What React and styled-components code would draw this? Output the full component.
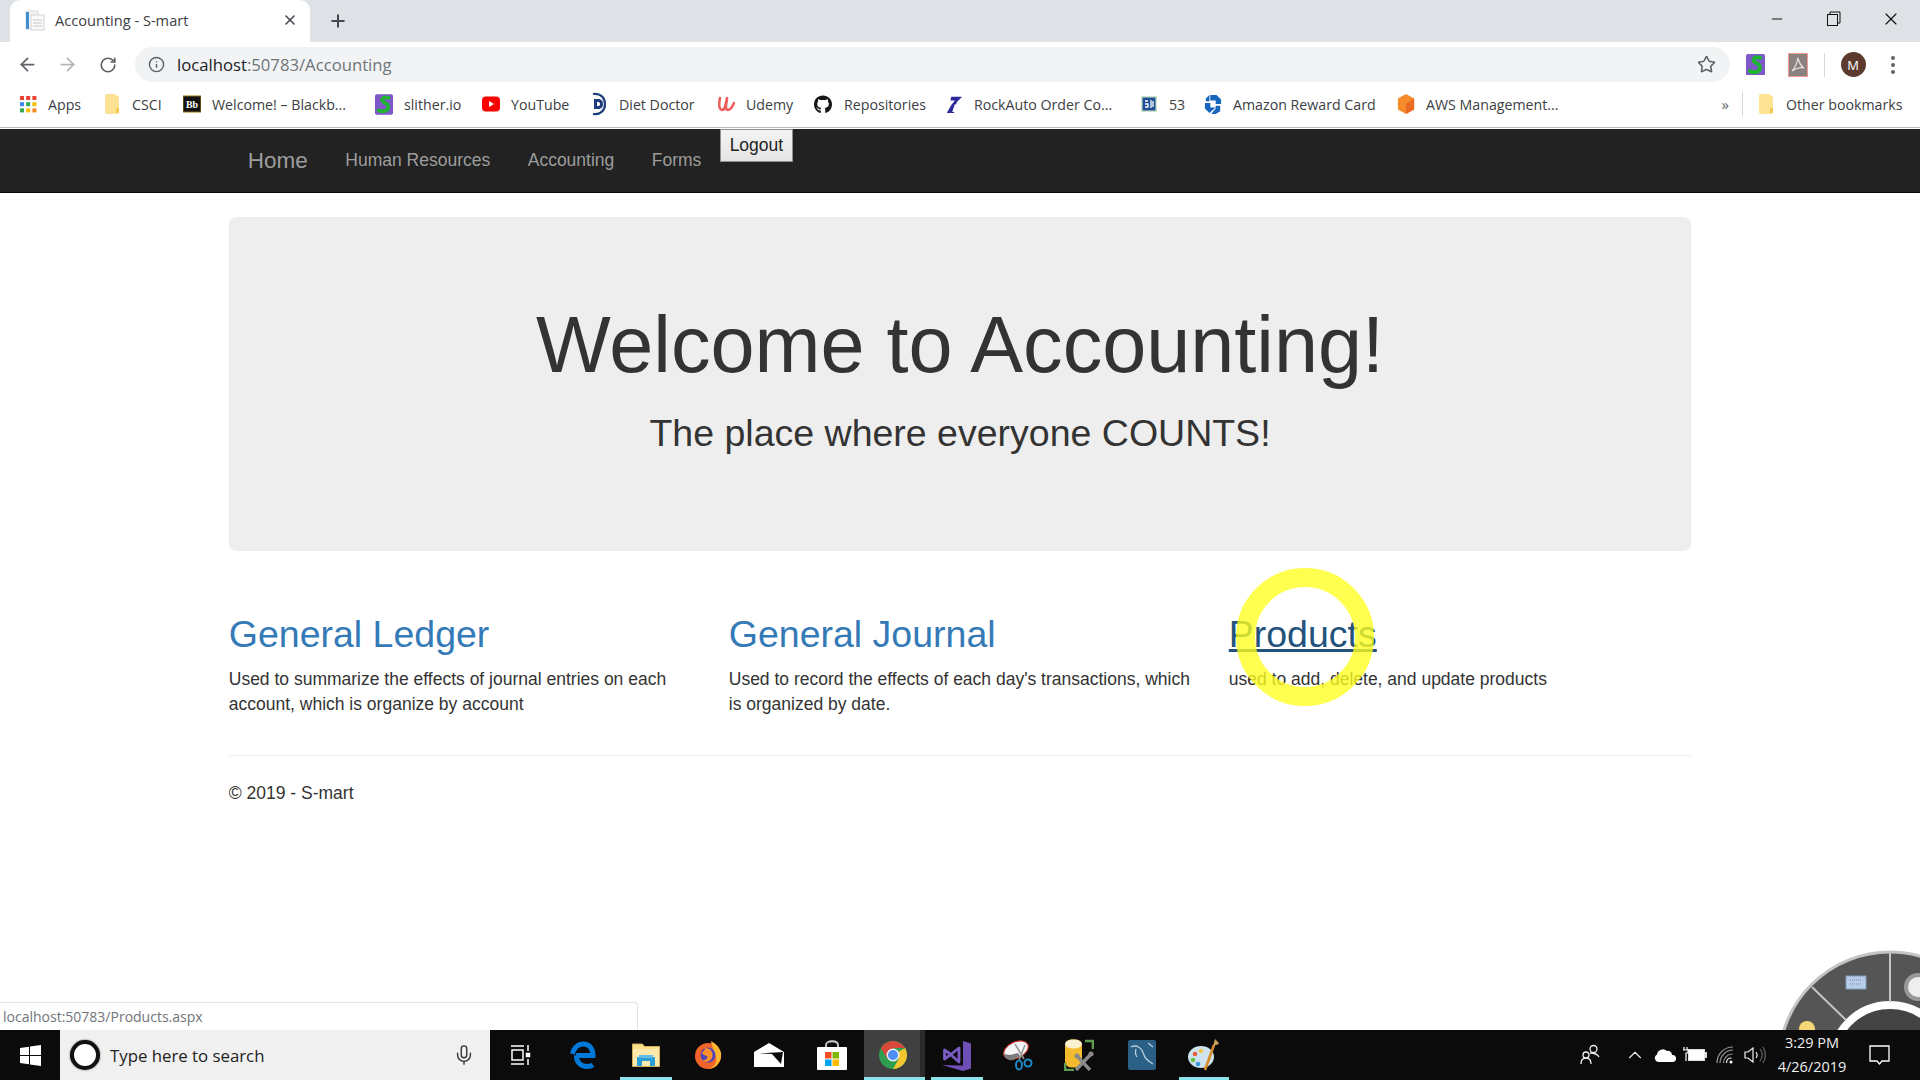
import React from "react";
import styled, { createGlobalStyle } from "styled-components";
import { FaGithub } from "react-icons/fa";
import { ArrowLeft, ArrowRight, RotateCw, Info, Star, Plus, X, Minus, Mic, ChevronUp } from "lucide-react";

const Global = createGlobalStyle`
  html, body { margin: 0; padding: 0; background: #fff; }
  * { box-sizing: border-box; }
`;

const UI_FONT = `"Open Sans", "Noto Sans", "Liberation Sans", sans-serif`;
const WEB_FONT = `"Liberation Sans", Arial, sans-serif`;

const Screen = styled.div`
  position: relative;
  width: 1920px;
  height: 1080px;
  overflow: hidden;
  display: flex;
  flex-direction: column;
  background: #fff;
`;

/* ---- browser chrome ---- */
const TabStrip = styled.div`
  height: 42px;
  flex: none;
  background: #dee1e6;
  display: flex;
  align-items: flex-end;
  padding-left: 10px;
  color: #3c4043;
`;
const Tab = styled.div`
  width: 300px;
  height: 42px;
  background: #fff;
  border-radius: 10px 10px 0 0;
  display: flex;
  align-items: center;
  padding: 0 12px 2px 15px;
`;
const TabTitle = styled.span`
  font: 14.6px ${UI_FONT};
  color: #3c4043;
  margin-left: 10px;
  flex: 1;
`;
const NewTab = styled.div`
  width: 56px;
  height: 42px;
  display: flex;
  align-items: center;
  justify-content: center;
  color: #44474b;
`;
const WindowControls = styled.div`
  margin-left: auto;
  height: 38px;
  align-self: flex-start;
  display: flex;
  align-items: center;
  padding-right: 1px;
  color: #111;
`;
const WinButton = styled.div`
  width: 57px;
  display: flex;
  justify-content: center;
`;
const Toolbar = styled.div`
  height: 40px;
  flex: none;
  background: #fff;
  display: flex;
  align-items: flex-end;
  padding: 0 8px 0 7px;
`;
const NavButton = styled.div`
  width: ${(p) => p.$w || 40}px;
  height: 35px;
  display: flex;
  align-items: center;
  justify-content: center;
  color: ${(p) => (p.$off ? "#b4b6b9" : "#5f6368")};
`;
const Omnibox = styled.div`
  flex: 1;
  height: 35px;
  margin-left: 7px;
  background: #f1f3f4;
  border-radius: 18px;
  display: flex;
  align-items: center;
  padding: 0 14px 0 13px;
  color: #5f6368;
`;
const Url = styled.span`
  margin-left: 12px;
  flex: 1;
  font: 16.7px ${UI_FONT};
  color: #202124;
`;
const UrlRest = styled.span`
  color: #70757a;
`;
const ExtSlot = styled.div`
  width: ${(p) => p.$w || 40}px;
  height: 35px;
  display: flex;
  align-items: center;
  justify-content: center;
`;
const ToolbarRule = styled.div`
  width: 1px;
  height: 24px;
  background: #d6d8da;
`;
const Avatar = styled.div`
  width: 25px;
  height: 25px;
  border-radius: 50%;
  background: #5d3a2e;
  color: #fff;
  font: 13px ${UI_FONT};
  display: flex;
  align-items: center;
  justify-content: center;
`;
const Bookmarks = styled.div`
  height: 46px;
  flex: none;
  background: #fff;
  display: flex;
  align-items: center;
  padding: 0 0 1px 19px;
  font: 14.2px ${UI_FONT};
  color: #3c4043;
  border-bottom: 1px solid #b9b9b9;
`;
const Bookmark = styled.div`
  width: ${(p) => p.$w}px;
  flex: none;
  display: flex;
  align-items: center;
  white-space: nowrap;
`;
const BookmarkIcon = styled.div`
  width: 18px;
  height: 22px;
  flex: none;
  margin-right: ${(p) => p.$gap ?? 11}px;
  display: flex;
  align-items: center;
  justify-content: center;
`;
const More = styled.span`
  margin-left: auto;
  font-size: 15px;
  color: #5f6368;
`;
const BarRule = styled.div`
  width: 1px;
  height: 24px;
  background: #d6d8da;
  margin: 0 14px 0 13px;
`;

/* ---- page ---- */
const Stage = styled.div`
  position: relative;
  flex: 1;
  min-height: 0;
  font: 17.5px/25px ${WEB_FONT};
  color: #333;
`;
const Navbar = styled.nav`
  height: 64px;
  margin-top: 1px;
  background: #222;
  border-bottom: 1px solid #080808;
  display: flex;
  align-items: flex-start;
  padding-left: 229px;
`;
const NavLink = styled.a`
  display: block;
  padding: 19px 18.75px;
  line-height: 25px;
  color: #9d9d9d;
  font-size: ${(p) => (p.$brand ? "22.5px" : "17.5px")};
`;
const LogoutButton = styled.button`
  height: 33px;
  margin-left: 0;
  padding: 0 8.5px;
  font: 17.5px ${WEB_FONT};
  color: #222;
  background: linear-gradient(#f4f4f4, #e4e4e4);
  border: 1px solid #8f8f8f;
`;
const Container = styled.main`
  width: 1462.5px;
  margin: 0 auto;
`;
const Jumbotron = styled.section`
  height: 334px;
  margin-top: 24px;
  padding: 60px 75px;
  background: #eee;
  border-radius: 7.5px;
  text-align: center;
`;
const Heading = styled.h1`
  margin: 25px 0 22.5px;
  font: 400 79.2px/86.6px ${WEB_FONT};
  color: #333;
`;
const Lead = styled.p`
  margin: 0;
  font: 400 37.5px/44px ${WEB_FONT};
  color: #333;
`;
const Columns = styled.div`
  display: grid;
  grid-template-columns: repeat(3, 462.5px);
  column-gap: 37.5px;
  margin-top: 37.5px;
`;
const Column = styled.article``;
const ColumnTitle = styled.h2`
  margin: 25px 0 12.5px;
  font: 400 37.5px/41.25px ${WEB_FONT};
`;
const ColumnLink = styled.a`
  color: ${(p) => (p.$hover ? "#23527c" : "#337ab7")};
  text-decoration: ${(p) => (p.$hover ? "underline" : "none")};
`;
const ColumnText = styled.p`
  margin: 0 0 12.5px;
`;
const Rule = styled.hr`
  margin: 25px 0 25px;
  border: 0;
  border-top: 1px solid #eee;
`;
const Footer = styled.footer`
  margin: 0;
`;
const StatusBubble = styled.div`
  position: absolute;
  left: 0;
  bottom: 0;
  width: 638px;
  height: 28px;
  background: #fff;
  border: 1px solid #e3e3e3;
  border-left: 0;
  border-bottom: 0;
  border-radius: 0 4px 0 0;
  padding-left: 3px;
  font: 14px/27px ${UI_FONT};
  color: #70757a;
`;
const RadialMenu = styled.svg`
  position: absolute;
  right: 0;
  bottom: 0;
  display: block;
`;
const ClickRing = styled.div`
  position: absolute;
  left: 1236px;
  top: 568px;
  width: 138px;
  height: 138px;
  border-radius: 50%;
  border: 19px solid rgba(255, 255, 30, 0.78);
  z-index: 5;
`;

/* ---- taskbar ---- */
const Taskbar = styled.footer`
  position: relative;
  height: 50px;
  flex: none;
  background: #0b0b0b;
  display: flex;
  align-items: stretch;
  color: #fff;
`;
const StartButton = styled.div`
  width: 60px;
  display: flex;
  align-items: center;
  justify-content: center;
`;
const SearchBox = styled.div`
  width: 430px;
  background: #f0f0f0;
  display: flex;
  align-items: center;
  padding: 0 15px 0 10px;
  font: 16.8px ${UI_FONT};
  color: #222;
`;
const Cortana = styled.div`
  width: 30px;
  height: 30px;
  border-radius: 50%;
  border: 4px solid #111;
  box-shadow: 0 0 2px #555;
  background: #fff;
  margin-right: 10px;
`;
const SearchText = styled.span`
  flex: 1;
`;
const TaskIcon = styled.div`
  position: relative;
  width: ${(p) => p.$w}px;
  flex: none;
  display: flex;
  align-items: center;
  justify-content: center;
  padding-right: ${(p) => (p.$active ? 3 : 0)}px;
  background: ${(p) => (p.$active ? "linear-gradient(to right, #404040 56px, #2a2a2a 56px)" : "transparent")};
  ${(p) =>
    p.$open
      ? `&::after {
          content: "";
          position: absolute;
          left: ${p.$active ? 0 : 6}px;
          right: ${p.$active ? 0 : 6}px;
          bottom: 0;
          height: 3px;
          background: #8be4ec;
        }`
      : ""}
`;
const Tray = styled.div`
  margin-left: auto;
  display: flex;
  align-items: stretch;
`;
const TrayIcon = styled.div`
  width: ${(p) => p.$w}px;
  display: flex;
  align-items: center;
  justify-content: center;
`;
const Clock = styled.div`
  width: 84px;
  display: flex;
  flex-direction: column;
  align-items: center;
  justify-content: center;
  font: 14.5px/24px ${UI_FONT};
  color: #eee;
`;

/* ---- drawings ---- */
const PageIcon = () => (
  <svg width="20" height="22" viewBox="0 0 20 22">
    <rect x="1" y="2" width="12" height="18" fill="#f4f4f4" stroke="#ddd" />
    <rect x="1" y="3" width="3" height="17" fill="#3f8fd0" />
    <rect x="6" y="6" width="13" height="15" fill="#fafafa" stroke="#cfd3d6" />
    <path d="M8 11h9M8 14h9M8 17h9" stroke="#c4c8cc" />
  </svg>
);
const AppsIcon = () => (
  <svg width="18" height="18" viewBox="0 0 18 18">
    {["#ea4335", "#ea4335", "#ea4335", "#4285f4", "#34a853", "#fbbc05", "#34a853", "#fbbc05", "#f28b1f"].map((c, i) => (
      <rect key={i} x={1 + (i % 3) * 6.2} y={1 + Math.floor(i / 3) * 6.2} width="4" height="4" fill={c} />
    ))}
  </svg>
);
const FolderIcon = () => (
  <svg width="16" height="22" viewBox="0 0 16 22">
    <path d="M1 3a2 2 0 0 1 2-2h8l4 3v15a2 2 0 0 1-2 2H3a2 2 0 0 1-2-2z" fill="#fde293" />
    <rect x="12" y="15" width="3" height="5" rx="1" fill="#f2c94c" />
  </svg>
);
const BbIcon = () => (
  <svg width="20" height="18" viewBox="0 0 20 18">
    <rect width="20" height="18" fill="#111" stroke="#b78f2c" />
    <text x="10" y="13" fontSize="11" fontWeight="700" fontFamily="Liberation Serif, serif" fill="#fff" textAnchor="middle">Bb</text>
  </svg>
);
const SnakeIcon = ({ size = 20 }) => (
  <svg width={size} height={size * 1.15} viewBox="0 0 20 23">
    <rect width="20" height="23" rx="2" fill="#7e57c9" />
    <path d="M15 4C8 2 6 7 10 9c4 2 6 4 4 8-1 2-6 3-10 1" fill="none" stroke="#1fb531" strokeWidth="4.200" strokeLinecap="round" />
  </svg>
);
const YouTubeIcon = () => (
  <svg width="18" height="16" viewBox="0 0 18 16">
    <rect width="18" height="15" y="0.5" rx="4" fill="#f00" />
    <path d="M7 5l5 3-5 3z" fill="#fff" />
  </svg>
);
const DietIcon = () => (
  <svg width="16" height="24" viewBox="0 0 16 24">
    <path d="M2 2c8-1 12 4 12 10s-4 11-12 10" fill="none" stroke="#1d3f7d" strokeWidth="2.2" />
    <path d="M3 7h4c4 0 5 2.500 5 5s-1 5-5 5H3zM6 10v4h1c2 0 2-1 2-2s0-2-2-2z" fill="#1d3f7d" fillRule="evenodd" />
  </svg>
);
const UdemyIcon = () => (
  <svg width="18" height="18" viewBox="0 0 18 18">
    <path d="M3 3c-1 5-2 11 2 12 3 0 4-6 5-12M10 5c-1 4-2 10 1 10s4-3 6-7" fill="none" stroke="#ec5f5f" strokeWidth="2.6" strokeLinecap="round" />
  </svg>
);
const RockAutoIcon = () => (
  <svg width="20" height="22" viewBox="0 0 20 22">
    <path d="M7 3h12l-6 6-3 12H2l5-9 4-5H6z" fill="#2a2a9c" />
    <path d="M8 20l3-9 2 1-2 8z" fill="#fff" />
  </svg>
);
const FiftyThreeIcon = () => (
  <svg width="16" height="16" viewBox="0 0 16 16">
    <rect width="16" height="16" fill="#cfe3cc" />
    <rect x="1.500" y="1.500" width="13" height="13" fill="#1f4f96" />
    <path d="M4 5h3M4 8h3v3H4M10 4v8M12 5v6" stroke="#fff" strokeWidth="1.300" fill="none" />
  </svg>
);
const ChaseIcon = () => (
  <svg width="20" height="24" viewBox="0 0 20 24">
    <path d="M7 2h7l5 5v5h-6V8H7zM18 14v6l-5 3H8l5-6v-3zM6 22l-5-5v-6h6v5h6zM2 9V6l4-4v7z" fill="#1667bd" />
  </svg>
);
const AwsIcon = () => (
  <svg width="20" height="24" viewBox="0 0 20 24">
    <path d="M10 1l9 5v12l-9 5-9-5V6z" fill="#f58b2b" />
    <path d="M10 12l9-6v12l-9 5z" fill="#e96a24" />
  </svg>
);
const PdfIcon = () => (
  <svg width="20" height="24" viewBox="0 0 20 24">
    <rect x="0.500" y="0.500" width="19" height="23" fill="#8b8280" stroke="#f09a92" />
    <path d="M10 5c-1 5-3 10-6 13 4-3 8-4 12-3-3-2-5-6-6-10z" fill="none" stroke="#e8e4e2" strokeWidth="1.200" />
  </svg>
);
const DotsIcon = () => (
  <svg width="6" height="20" viewBox="0 0 6 20">
    <circle cx="3" cy="3" r="2" fill="#5f6368" />
    <circle cx="3" cy="10" r="2" fill="#5f6368" />
    <circle cx="3" cy="17" r="2" fill="#5f6368" />
  </svg>
);
const RestoreIcon = () => (
  <svg width="14" height="16" viewBox="0 0 14 16">
    <rect x="0.500" y="3.500" width="10" height="11" fill="none" stroke="#111" />
    <path d="M3 3V1h10v11h-2" fill="none" stroke="#111" />
  </svg>
);
const WindowsLogo = () => (
  <svg width="21" height="21" viewBox="0 0 21 21">
    <path d="M0 3l9-1.300V10H0zM10 1.500L21 0v10H10zM0 11h9v8.300L0 18zM10 11h11v10L10 19.500z" fill="#fff" />
  </svg>
);
const TaskViewIcon = () => (
  <svg width="22" height="22" viewBox="0 0 22 22" fill="none" stroke="#fff" strokeWidth="1.500">
    <path d="M1 2h13M1 20h13M2 6h11v10H2zM18 1v6M18 15v6" />
    <rect x="16.500" y="9.500" width="3" height="3" fill="#fff" />
  </svg>
);
const EdgeIcon = () => (
  <svg width="26" height="28" viewBox="0 0 26 28">
    <path d="M6 14.500h17C23 7 18.500 3 13.500 3 8 3 3.500 7 2.500 13M6.500 14.500C6 21 11 25.500 17 25.500c2.500 0 4.500-.5 6-1.500" fill="none" stroke="#0078d7" strokeWidth="5" />
  </svg>
);
const ExplorerIcon = () => (
  <svg width="28" height="24" viewBox="0 0 28 24">
    <path d="M0.500 1h10l2 2.500h15v20h-27z" fill="#fde08a" stroke="#d2ad5c" />
    <rect x="1" y="6" width="26" height="17" fill="#fee9ac" />
    <path d="M5 14h18v9h-5v-5h-8v5H5z" fill="#2d9fd8" />
    <rect x="7" y="12" width="14" height="3" fill="#61bde8" />
  </svg>
);
const FirefoxIcon = () => (
  <svg width="28" height="28" viewBox="0 0 28 28">
    <circle cx="14" cy="15" r="13" fill="#f0632a" />
    <path d="M17 0c8 4 11 11 10 16-1 7-7 12-13 12 6-2 9-6 8-12-1-5-4-9-5-16z" fill="#ffb52e" />
    <circle cx="14" cy="14" r="7.500" fill="#4f46b8" />
    <path d="M11 7c6 0 9 5 7 10-2 4-7 5-10 2 4 1 6-2 5-4-2-1-4-1-5-3 1-2 3-2 3-5z" fill="#ff8f26" />
  </svg>
);
const MailIcon = () => (
  <svg width="30" height="24" viewBox="0 0 30 24">
    <path d="M0 9L15 0l15 9v15H0z" fill="#fff" />
    <path d="M5 10.500L29 9l-2 12-9-10z" fill="#0b0b0b" />
  </svg>
);
const StoreIcon = () => (
  <svg width="30" height="30" viewBox="0 0 30 30">
    <path d="M9 8V5c0-5 12-5 12 0v3" fill="none" stroke="#cfcfcf" strokeWidth="1.800" />
    <rect y="7" width="30" height="23" rx="1" fill="#fff" />
    <rect x="8" y="12" width="6.500" height="6.500" fill="#f25022" />
    <rect x="15.500" y="12" width="6.500" height="6.500" fill="#7fba00" />
    <rect x="8" y="19.500" width="6.500" height="6.500" fill="#00a4ef" />
    <rect x="15.500" y="19.500" width="6.500" height="6.500" fill="#ffb900" />
  </svg>
);
const ChromeIcon = () => (
  <svg width="28" height="28" viewBox="0 0 28 28">
    <circle cx="14" cy="14" r="14" fill="#2f9e50" />
    <path d="M14 14L26.100 7A14 14 0 0 1 14 28l6-10.500z" fill="#f7c52d" />
    <path d="M14 7H26.100A14 14 0 0 0 1.900 7L8 17.500 14 14z" fill="#d9483b" />
    <circle cx="14" cy="14" r="6.500" fill="#f1f1f1" />
    <circle cx="14" cy="14" r="5" fill="#4e8ef7" />
  </svg>
);
const VsIcon = () => (
  <svg width="30" height="31" viewBox="0 0 30 31">
    <path d="M21 1l8 2.500v25L21 31 0 25l21 .5z" fill="#6d4fb6" />
    <path d="M2.500 10v9l5-3.500L17 8v14L7.500 13.500z" fill="none" stroke="#7a5cc4" strokeWidth="2.800" strokeLinejoin="round" />
  </svg>
);
const SnipIcon = () => (
  <svg width="30" height="32" viewBox="0 0 30 32">
    <ellipse cx="13" cy="11" rx="13" ry="8" transform="rotate(-25 13 11)" fill="#f6f6f6" stroke="#c9342c" strokeWidth="1.200" />
    <path d="M1 15c1 5 5 7 9 6l7-4-2-3-8 2z" fill="#7c7c7c" />
    <path d="M12 5l9 15M22 6l-6 15" stroke="#999" strokeWidth="1.600" />
    <ellipse cx="16" cy="26" rx="3" ry="4.500" fill="none" stroke="#1c88c7" strokeWidth="2" />
    <ellipse cx="25" cy="24" rx="3.500" ry="3.500" fill="none" stroke="#1c88c7" strokeWidth="2" />
  </svg>
);
const ToolsIcon = () => (
  <svg width="30" height="32" viewBox="0 0 30 32">
    <rect x="1" y="0.500" width="17" height="28" rx="6" fill="#f4bb2f" />
    <ellipse cx="9.500" cy="5" rx="8.500" ry="4.500" fill="#f9f1d0" />
    <path d="M21 2h8v8M1 24v7h9" fill="none" stroke="#5f9e50" strokeWidth="2.600" />
    <path d="M12 31L27 15M13 17l13 14" stroke="#8a8a8a" strokeWidth="3.400" />
    <circle cx="27" cy="15" r="2.500" fill="#8a8a8a" />
    <circle cx="13" cy="17" r="2.500" fill="#8a8a8a" />
  </svg>
);
const MysqlIcon = () => (
  <svg width="28" height="30" viewBox="0 0 28 30">
    <rect width="28" height="30" rx="2" fill="#2a5f86" />
    <path d="M3 7c6-3 11 1 13 8 1 4 4 6 9 9M8 9c-1 3-1 5 1 8M20 3l5 4" fill="none" stroke="#b6cddd" strokeWidth="1.300" />
  </svg>
);
const PaintIcon = () => (
  <svg width="32" height="32" viewBox="0 0 32 32">
    <ellipse cx="13" cy="18" rx="13" ry="11" fill="#cfe3ee" />
    <circle cx="7" cy="15" r="2.300" fill="#e7603c" />
    <circle cx="13" cy="12" r="2.300" fill="#f2c94c" />
    <circle cx="5" cy="21" r="2.300" fill="#6cc04a" />
    <circle cx="10" cy="25" r="2.300" fill="#3498db" />
    <path d="M26 6L17 31" stroke="#d68a2a" strokeWidth="2.600" />
    <path d="M25 7l2-7 3 3 1 2z" fill="#c9a15a" />
  </svg>
);
const PeopleIcon = () => (
  <svg width="20" height="22" viewBox="0 0 20 22" fill="none" stroke="#eee" strokeWidth="1.300">
    <circle cx="13.500" cy="5" r="3.500" />
    <circle cx="6" cy="11" r="3" />
    <path d="M1 20c0-4 2-6 5-6s5 2 5 6M10 9c3 0 7 0 9 4" />
  </svg>
);
const CloudIcon = () => (
  <svg width="22" height="14" viewBox="0 0 22 14">
    <path d="M4 14a4 4 0 0 1-1-7.500A6 6 0 0 1 13 3a4 4 0 0 1 5 4 3.500 3.500 0 0 1 1 7z" fill="#fff" />
  </svg>
);
const BatteryIcon = () => (
  <svg width="24" height="16" viewBox="0 0 24 16">
    <rect x="5.500" y="2.500" width="16" height="11" fill="#fff" stroke="#ddd" />
    <rect x="22" y="5" width="2" height="6" fill="#ddd" />
    <path d="M1 0v3M4 0v3M0 3h5v3H3v8" fill="none" stroke="#fff" strokeWidth="1.200" />
  </svg>
);
const WifiIcon = () => (
  <svg width="18" height="18" viewBox="0 0 18 18" fill="none" stroke="#999" strokeWidth="1.200">
    <path d="M1 17C1 8 8 1 17 1M4 17C4 10 10 4 17 4M7.500 17c0-5 4-9 9-9" />
    <path d="M10.500 17c0-3 2-5 5-5" stroke="#eee" />
    <circle cx="15" cy="16" r="1.500" fill="#fff" stroke="none" />
  </svg>
);
const SpeakerIcon = () => (
  <svg width="22" height="18" viewBox="0 0 22 18" fill="none" stroke="#eee" strokeWidth="1.200">
    <path d="M1 6h3l5-4v14l-5-4H1zM12 6c1.500 2 1.500 4 0 6" />
    <path d="M16 3c3 4 3 8 0 12M19 1c3 5 3 11 0 16" stroke="#666" />
  </svg>
);
const NotifyIcon = () => (
  <svg width="21" height="21" viewBox="0 0 21 21" fill="none" stroke="#fff" strokeWidth="1.300">
    <path d="M1 1h19v15h-7l-2.500 3L8 16H1z" />
  </svg>
);

const bookmarks = [
  { w: 84, label: "Apps", icon: <AppsIcon /> },
  { w: 80, label: "CSCI", icon: <FolderIcon /> },
  { w: 192, label: "Welcome! – Blackb...", icon: <BbIcon /> },
  { w: 107, label: "slither.io", icon: <SnakeIcon /> },
  { w: 108, label: "YouTube", icon: <YouTubeIcon /> },
  { w: 127, label: "Diet Doctor", icon: <DietIcon /> },
  { w: 97, label: "Udemy", icon: <UdemyIcon /> },
  { w: 131, label: "Repositories", icon: <FaGithub size={21} color="#181717" />, gap: 12 },
  { w: 195, label: "RockAuto Order Co...", icon: <RockAutoIcon /> },
  { w: 64, label: "53", icon: <FiftyThreeIcon /> },
  { w: 193, label: "Amazon Reward Card", icon: <ChaseIcon /> },
  { w: 200, label: "AWS Management...", icon: <AwsIcon /> },
];

const tasks = [
  { w: 62, icon: <TaskViewIcon /> },
  { w: 62, icon: <EdgeIcon /> },
  { w: 64, icon: <ExplorerIcon />, open: true },
  { w: 60, icon: <FirefoxIcon /> },
  { w: 62, icon: <MailIcon /> },
  { w: 64, icon: <StoreIcon /> },
  { w: 61, icon: <ChromeIcon />, open: true, active: true },
  { w: 64, icon: <VsIcon />, open: true },
  { w: 58, icon: <SnipIcon /> },
  { w: 64, icon: <ToolsIcon /> },
  { w: 62, icon: <MysqlIcon /> },
  { w: 62, icon: <PaintIcon />, open: true },
];

const columns = [
  { title: "General Ledger", text: "Used to summarize the effects of journal entries on each account, which is organize by account" },
  { title: "General Journal", text: "Used to record the effects of each day's transactions, which is organized by date." },
  { title: "Products", text: "used to add, delete, and update products", hover: true },
];

export default function App() {
  return (
    <Screen>
      <Global />
      <TabStrip>
        <Tab>
          <PageIcon />
          <TabTitle>Accounting - S-mart</TabTitle>
          <X size={16} strokeWidth={2.4} color="#44474b" />
        </Tab>
        <NewTab>
          <Plus size={20} strokeWidth={2.4} />
        </NewTab>
        <WindowControls>
          <WinButton><Minus size={16} strokeWidth={1.6} /></WinButton>
          <WinButton><RestoreIcon /></WinButton>
          <WinButton><X size={20} strokeWidth={1.4} /></WinButton>
        </WindowControls>
      </TabStrip>
      <Toolbar>
        <NavButton><ArrowLeft size={21} strokeWidth={2} /></NavButton>
        <NavButton $off><ArrowRight size={21} strokeWidth={2} /></NavButton>
        <NavButton $w={41}><RotateCw size={18} strokeWidth={2.2} /></NavButton>
        <Omnibox>
          <Info size={17} strokeWidth={2} />
          <Url>localhost<UrlRest>:50783/Accounting</UrlRest></Url>
          <Star size={19} strokeWidth={2} />
        </Omnibox>
        <ExtSlot $w={50}><SnakeIcon size={19} /></ExtSlot>
        <ExtSlot $w={36}><PdfIcon /></ExtSlot>
        <ExtSlot $w={16}><ToolbarRule /></ExtSlot>
        <ExtSlot $w={42}><Avatar>M</Avatar></ExtSlot>
        <ExtSlot $w={38}><DotsIcon /></ExtSlot>
      </Toolbar>
      <Bookmarks>
        {bookmarks.map((b) => (
          <Bookmark key={b.label} $w={b.w}>
            <BookmarkIcon $gap={b.gap}>{b.icon}</BookmarkIcon>
            {b.label}
          </Bookmark>
        ))}
        <More>»</More>
        <BarRule />
        <Bookmark $w={163}>
          <BookmarkIcon><FolderIcon /></BookmarkIcon>
          Other bookmarks
        </Bookmark>
      </Bookmarks>
      <Stage>
        <Navbar>
          <NavLink $brand>Home</NavLink>
          <NavLink>Human Resources</NavLink>
          <NavLink>Accounting</NavLink>
          <NavLink>Forms</NavLink>
          <LogoutButton>Logout</LogoutButton>
        </Navbar>
        <Container>
          <Jumbotron>
            <Heading>Welcome to Accounting!</Heading>
            <Lead>The place where everyone COUNTS!</Lead>
          </Jumbotron>
          <Columns>
            {columns.map((c) => (
              <Column key={c.title}>
                <ColumnTitle><ColumnLink $hover={c.hover}>{c.title}</ColumnLink></ColumnTitle>
                <ColumnText>{c.text}</ColumnText>
              </Column>
            ))}
          </Columns>
          <Rule />
          <Footer>© 2019 - S-mart</Footer>
        </Container>
        <RadialMenu width="140" height="80" viewBox="1780 950 140 80">
          <circle cx="1890" cy="1063" r="111" fill="#555" stroke="#c4c4c4" strokeWidth="3" />
          <circle cx="1890" cy="1063" r="58" fill="#444" stroke="#fff" strokeWidth="8" />
          <path d="M1890 952v50M1812 987l34 33" stroke="#c4c4c4" strokeWidth="2" />
          <rect x="1846" y="976" width="20" height="13" fill="#b9cde6" stroke="#7f9cc0" />
          <path d="M1850 980h12M1850 984h12" stroke="#6f8db3" strokeDasharray="1 1" />
          <circle cx="1807" cy="1029" r="8" fill="#f6d775" />
          <circle cx="1918" cy="987" r="12" fill="#eee" stroke="#999" strokeWidth="4" />
        </RadialMenu>
        <StatusBubble>localhost:50783/Products.aspx</StatusBubble>
      </Stage>
      <Taskbar>
        <StartButton><WindowsLogo /></StartButton>
        <SearchBox>
          <Cortana />
          <SearchText>Type here to search</SearchText>
          <Mic size={22} strokeWidth={1.5} color="#333" />
        </SearchBox>
        {tasks.map((t, i) => (
          <TaskIcon key={i} $w={t.w} $open={t.open} $active={t.active}>{t.icon}</TaskIcon>
        ))}
        <Tray>
          <TrayIcon $w={30}><PeopleIcon /></TrayIcon>
          <TrayIcon $w={15} />
          <TrayIcon $w={30}><ChevronUp size={22} strokeWidth={1.2} color="#eee" /></TrayIcon>
          <TrayIcon $w={30}><CloudIcon /></TrayIcon>
          <TrayIcon $w={30}><BatteryIcon /></TrayIcon>
          <TrayIcon $w={30}><WifiIcon /></TrayIcon>
          <TrayIcon $w={30}><SpeakerIcon /></TrayIcon>
          <Clock>
            <span>3:29 PM</span>
            <span>4/26/2019</span>
          </Clock>
          <TrayIcon $w={50}><NotifyIcon /></TrayIcon>
          <TrayIcon $w={16} />
        </Tray>
      </Taskbar>
      <ClickRing />
    </Screen>
  );
}
